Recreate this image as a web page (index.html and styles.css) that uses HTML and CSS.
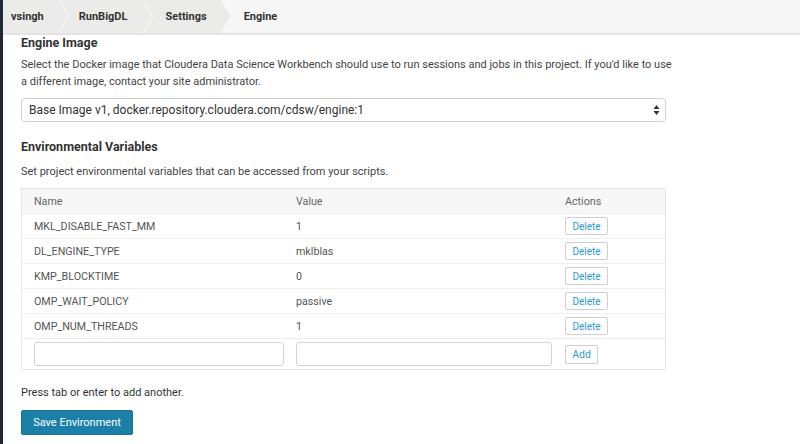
FILE: index.html
```html
<!DOCTYPE html>
<html>
<head>
<meta charset="utf-8">
<link rel="stylesheet" href="styles.css">
</head>
<body>
<div class="app">
  <div class="sidebar"></div>
  <div class="main">
    <nav class="crumbs">
      <span class="crumb first">vsingh</span>
      <svg class="sep" width="10" height="33" viewBox="0 0 10 33"><polygon points="0,0 10,0 10,33 0,33" fill="#ebebe9"/><polyline points="0,0 9.5,16.5 0,33" fill="none" stroke="#f6f6f5" stroke-width="1.2"/></svg>
      <span class="crumb">RunBigDL</span>
      <svg class="sep" width="10" height="33" viewBox="0 0 10 33"><polygon points="0,0 10,0 10,33 0,33" fill="#ebebe9"/><polyline points="0,0 9.5,16.5 0,33" fill="none" stroke="#f6f6f5" stroke-width="1.2"/></svg>
      <span class="crumb">Settings</span>
      <svg class="sep" width="10" height="33" viewBox="0 0 10 33"><polygon points="0,0 9.5,16.5 0,33" fill="#ebebe9"/><polyline points="0,0 9.5,16.5 0,33" fill="none" stroke="#f3f3f2" stroke-width="1"/></svg>
      <span class="crumb current">Engine</span>
    </nav>
    <div class="content">
      <h2 class="heading">Engine Image</h2>
      <p class="desc">Select the Docker image that Cloudera Data Science Workbench should use to run sessions and jobs in this project. If you'd like to use a different image, contact your site administrator.</p>
      <div class="select">
        <span>Base Image v1, docker.repository.cloudera.com/cdsw/engine:1</span>
        <svg class="arrows" width="7" height="12" viewBox="0 0 7 12"><polygon points="3.5,1 6.5,5 0.5,5" fill="#333"/><polygon points="0.5,7 6.5,7 3.5,11" fill="#333"/></svg>
      </div>
      <h2 class="heading heading2">Environmental Variables</h2>
      <p class="desc desc2">Set project environmental variables that can be accessed from your scripts.</p>
      <div class="table">
        <div class="row head"><div class="c1">Name</div><div class="c2">Value</div><div class="c3">Actions</div></div>
        <div class="row"><div class="c1">MKL_DISABLE_FAST_MM</div><div class="c2">1</div><div class="c3"><button class="btn">Delete</button></div></div>
        <div class="row"><div class="c1">DL_ENGINE_TYPE</div><div class="c2">mklblas</div><div class="c3"><button class="btn">Delete</button></div></div>
        <div class="row"><div class="c1">KMP_BLOCKTIME</div><div class="c2">0</div><div class="c3"><button class="btn">Delete</button></div></div>
        <div class="row"><div class="c1">OMP_WAIT_POLICY</div><div class="c2">passive</div><div class="c3"><button class="btn">Delete</button></div></div>
        <div class="row"><div class="c1">OMP_NUM_THREADS</div><div class="c2">1</div><div class="c3"><button class="btn">Delete</button></div></div>
        <div class="row inputs"><div class="c1"><input class="inp inp1" type="text"></div><div class="c2"><input class="inp inp2" type="text"></div><div class="c3"><button class="btn add">Add</button></div></div>
      </div>
      <p class="hint">Press tab or enter to add another.</p>
      <button class="save">Save Environment</button>
    </div>
  </div>
</div>
</body>
</html>
```
FILE: styles.css
```css
* { box-sizing: border-box; }
html, body { margin: 0; padding: 0; }
body {
  font-family: Roboto, "Liberation Sans", Arial, sans-serif;
  background: #fff;
  color: #333;
  width: 800px;
  height: 444px;
  overflow: hidden;
}
.app { display: flex; height: 444px; }
.sidebar { width: 3px; background: #1d2838; flex: none; }
.main { flex: 1; display: flex; flex-direction: column; }
.crumbs {
  display: flex;
  align-items: stretch;
  height: 35px;
  flex: none;
  background: #f7f7f7;
  border-bottom: 2px solid #e3e3e3;
}
.crumb {
  display: flex;
  align-items: center;
  background: #ebebe9;
  font-size: 11px;
  font-weight: 700;
  color: #333;
  height: 33px;
}
.crumb.first { padding: 0 15px 0 8px; }
.crumb:nth-of-type(2) { padding: 0 16px 0 10px; }
.crumb:nth-of-type(3) { padding: 0 14px 0 12px; }
.crumb.current { background: transparent; padding-left: 13px; }
.sep { flex: none; display: block; }
.content { padding: 0 0 0 18px; width: 663px; }
.heading {
  margin: 0;
  font-size: 12.5px;
  line-height: 16px;
  font-weight: 700;
  color: #333;
}
.desc {
  margin: 4.5px -12px 0 0;
  font-size: 11px;
  line-height: 17px;
  color: #444;
}
.select {
  margin-top: 8.5px;
  height: 24px;
  border: 1px solid #cfcfcf;
  border-radius: 4px;
  display: flex;
  align-items: center;
  justify-content: space-between;
  padding: 0 5px 0 7px;
  font-size: 12px;
  color: #333;
}
.arrows { display: block; }
.heading2 { margin-top: 17px; }
.desc2 { margin-top: 7.5px; }
.table {
  margin-top: 8.5px;
  border: 1px solid #e4e4e4;
}
.row {
  display: grid;
  grid-template-columns: 262px 268px 1fr;
  height: 25px;
  align-items: center;
  border-top: 1px solid #efefef;
  font-size: 10.7px;
  color: #555;
}
.row.head {
  border-top: none;
  background: #f7f7f7;
  height: 24px;
  color: #666;
}
.c1 { padding-left: 12px; }
.c2 { padding-left: 12px; }
.c3 { padding-left: 13px; }
.btn {
  font-family: Roboto, "Liberation Sans", Arial, sans-serif;
  font-size: 10px;
  color: #2b9dd2;
  background: #fff;
  border: 1px solid #cfcfcf;
  border-radius: 2px;
  height: 18px;
  width: 43px;
  padding: 0;
  display: block;
}
.btn.add { width: 33px; height: 19px; font-size: 10.5px; }
.row.inputs { height: 31px; }
.inp {
  display: block;
  height: 24px;
  border: 1px solid #d3d3d3;
  border-radius: 3px;
  background: #fff;
  padding: 0;
}
.inp1 { width: 250px; }
.inp2 { width: 256px; }
.hint {
  margin: 15px 0 0 0;
  font-size: 11px;
  line-height: 15px;
  color: #333;
}
.save {
  margin-top: 9.5px;
  display: block;
  width: 112px;
  height: 25px;
  background: #1b7fa8;
  color: #fff;
  border: 1px solid #17739a;
  border-radius: 2px;
  font-family: Roboto, "Liberation Sans", Arial, sans-serif;
  font-size: 11px;
  padding: 0;
}
```
